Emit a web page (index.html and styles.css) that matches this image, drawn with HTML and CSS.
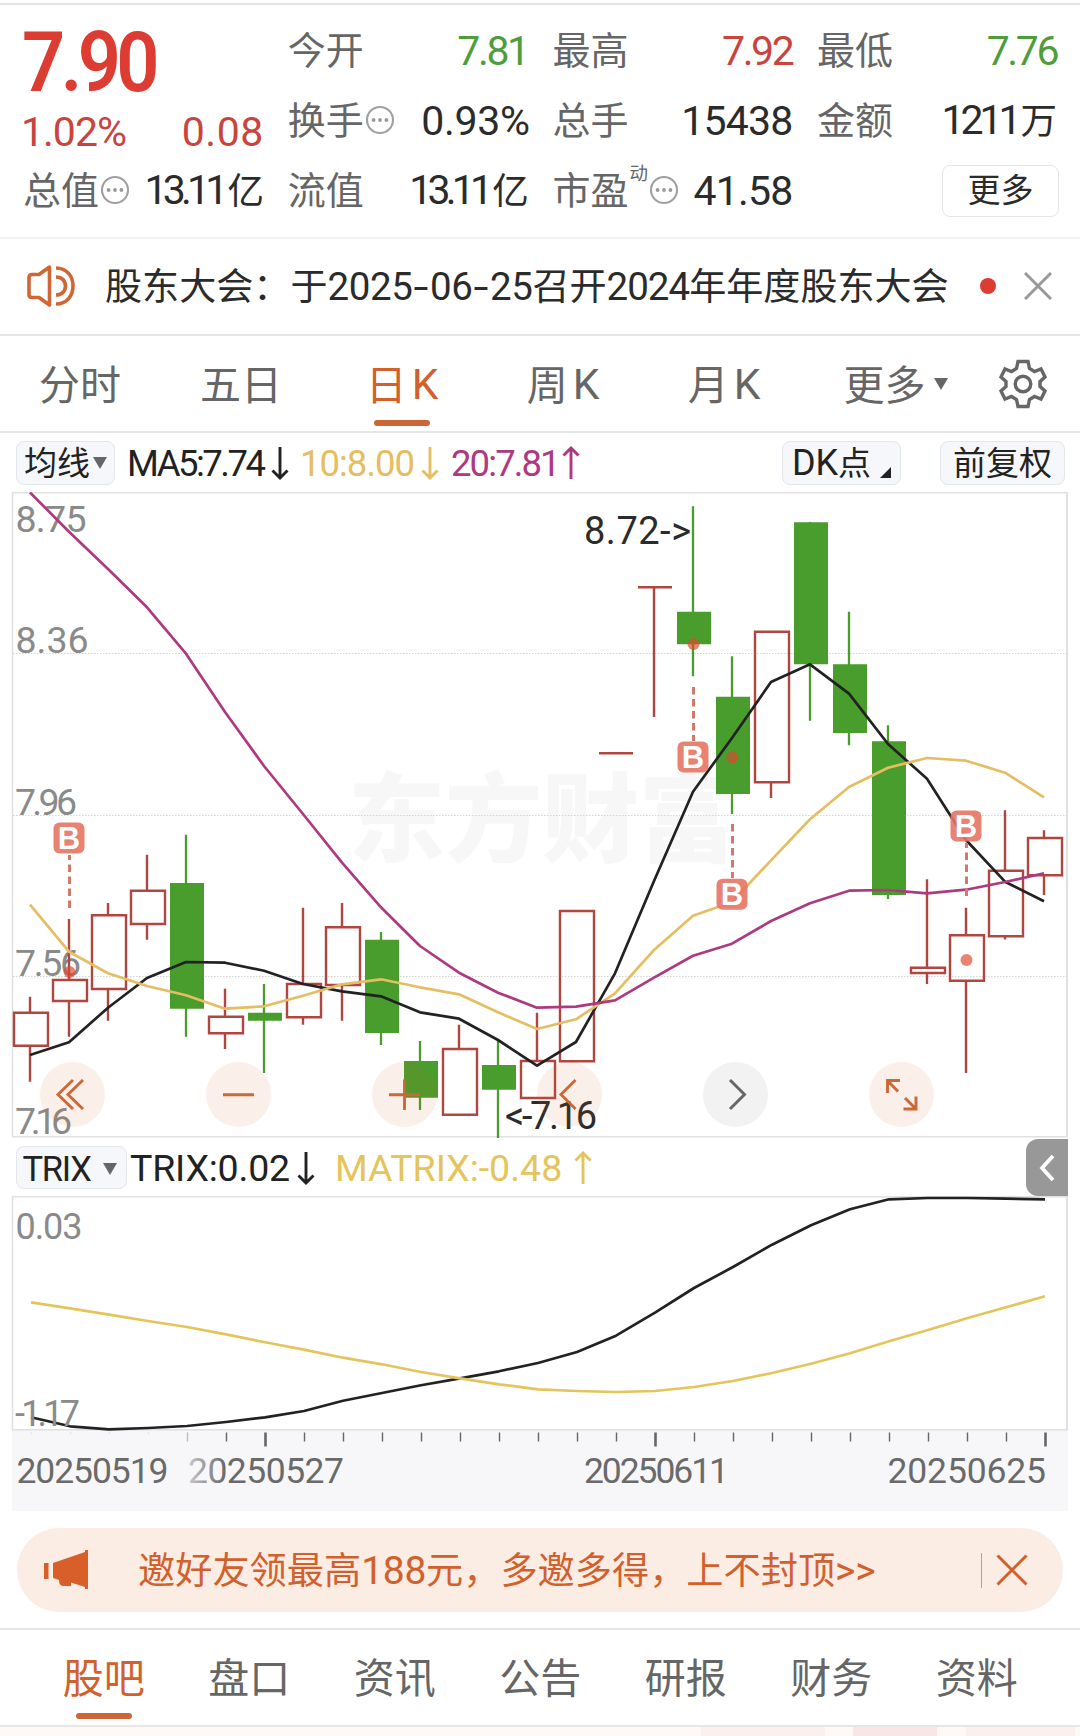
FILE: index.html
```html
<!DOCTYPE html>
<html lang="zh-CN">
<head>
<meta charset="utf-8">
<title>日K</title>
<link rel="stylesheet" href="styles.css">
</head>
<body>
<svg class="defs" width="0" height="0">
  <symbol id="more" viewBox="0 0 30 30"><circle cx="15" cy="15" r="13" fill="none" stroke="#a0a0a0" stroke-width="2.1"/><g fill="#999"><circle cx="8.6" cy="15" r="1.9"/><circle cx="15" cy="15" r="1.9"/><circle cx="21.4" cy="15" r="1.9"/></g></symbol>
  <symbol id="down" viewBox="0 0 18 34"><path d="M9 1V32M1.5 24.5L9 32L16.500 24.5" fill="none" stroke="currentColor" stroke-width="2.9"/></symbol>
  <symbol id="up" viewBox="0 0 18 34"><path d="M9 33V2M1.500 9.500L9 2L16.500 9.500" fill="none" stroke="currentColor" stroke-width="2.9"/></symbol>
  <symbol id="caret" viewBox="0 0 14 12"><path d="M0 0H14L7 12Z" fill="#666"/></symbol>
</svg>

<header class="quote">
  <div class="price">
    <div class="last">7.90</div>
    <div class="change"><span class="pct">1.02%</span><span class="diff">0.08</span></div>
  </div>
  <div class="cell"><span class="label">今开</span><span class="num tight green">7.81</span></div>
  <div class="cell"><span class="label">最高</span><span class="num tight red">7.92</span></div>
  <div class="cell"><span class="label">最低</span><span class="num tight green">7.76</span></div>
  <div class="cell"><span class="label">换手</span><svg class="more"><use href="#more"/></svg><span class="num pc">0.93%</span></div>
  <div class="cell"><span class="label">总手</span><span class="num">15438</span></div>
  <div class="cell"><span class="label">金额</span><span class="num ones">1211<b>万</b></span></div>
  <div class="cell"><span class="label">总值</span><svg class="more"><use href="#more"/></svg><span class="num cap">13.11<b>亿</b></span></div>
  <div class="cell"><span class="label">流值</span><span class="num cap">13.11<b>亿</b></span></div>
  <div class="cell"><span class="label">市盈<sup>动</sup></span><svg class="more pe"><use href="#more"/></svg><span class="num pev">41.58</span></div>
  <div class="cell end"><button class="btn-more">更多</button></div>
</header>

<section class="notice">
  <svg class="speaker" viewBox="0 0 50 44" fill="none" stroke="#cf6635" stroke-width="3.6"><path d="M23.500 3L13 10.500H6Q3 10.500 3 13.500V30.500Q3 33.500 6 33.500H13L23.500 41Z" stroke-linejoin="round"/><path d="M30 4C41 4 47 12.500 47 22C47 31.500 41 40 30 40M30 13C36 13 39.500 17 39.500 22C39.500 27 36 31 30 31"/></svg>
  <p>股东大会：于<i>2025<s>-</s>06<s>-</s>25</i>召开<i class="year">2024</i>年年度股东大会</p>
  <span class="dot"></span>
  <svg class="close" viewBox="0 0 28 28"><path d="M1 1L27 27M27 1L1 27" stroke="#999" stroke-width="3"/></svg>
</section>

<nav class="periods">
  <span>分时</span><span>五日</span><span class="on">日<i>K</i></span><span>周<i>K</i></span><span>月<i>K</i></span>
  <span>更多<svg class="caret"><use href="#caret"/></svg></span>
  <svg class="gear" viewBox="0 0 48 50" fill="none" stroke="#666" stroke-width="3.4"><path d="M19 2.500H29L30.500 9.500L35.500 12.500L42 10L46 18L41 22.500V27.500L46 32L42 40L35.500 37.500L30.500 40.500L29 47.500H19L17.500 40.500L12.500 37.500L6 40L2 32L7 27.500V22.500L2 18L6 10L12.500 12.500L17.500 9.500Z"/><circle cx="24" cy="25" r="7.800"/></svg>
</nav>

<div class="bar ma">
  <span class="chip avg"><em>均线</em><svg class="caret"><use href="#caret"/></svg></span>
  <span class="val v1">MA5:7.74</span><svg class="arrow a1"><use href="#down"/></svg>
  <span class="val v2">10:8.00</span><svg class="arrow a2"><use href="#down"/></svg>
  <span class="val v3">20:7.81</span><svg class="arrow a3"><use href="#up"/></svg>
  <span class="chip dk"><em><i>DK</i>点</em><svg class="corner" viewBox="0 0 11 11"><path d="M11 0V11H0Z" fill="#222"/></svg></span>
  <span class="chip fq"><em>前复权</em></span>
</div>

<svg class="kline" viewBox="0 492 1080 646" width="1080" height="646">
  <text class="mark" x="348" y="854" textLength="388">东方财富</text>
  <g class="frame"><path d="M12 492.700H1068M12.500 492V1137M12 1136.700H1068"/><path d="M1067 492V1137" stroke-width="2"/></g>
  <path class="grid" d="M13 653.500H1067M13 815.500H1067M13 976.500H1067"/>
  <g class="scale">
    <text x="15.500" y="532" textLength="71">8.75</text><text x="15.500" y="653" textLength="73">8.36</text><text x="15" y="815" textLength="62">7.96</text><text x="15" y="976" textLength="66">7.56</text><text x="15" y="1134" textLength="57">7.16</text>
  </g>
  <g class="tip"><text x="584" y="544" textLength="107">8.72-&gt;</text><text x="505" y="1129" textLength="92">&lt;-7.16</text></g>
  <g class="fall">
    <path d="M186 834.700V1036.700M264 984V1073M381 932V1045M420 1041V1110M498 1041V1138M693 506.300V676.300M732 656.300V814M810 522V720.700M849 611.700V745.300M888 725.300V899" fill="none" stroke-width="2.300"/>
    <path class="solid" d="M170 883h34v125.700h-34zM248 1012.700h34v8h-34zM365 939.700h34v93.300h-34zM404 1061h34v36.700h-34zM482 1065h34v24.700h-34zM677 611.700h34v32.600h-34zM716 696.700h34v97.300h-34zM794 522.300h34v142h-34zM833 664.300h34v68.700h-34zM872 741.300h34v153.700h-34z"/>
  </g>
  <path class="rise" d="M14 1012.700h34v33h-34zM30 996.700v16M30 1045.700v36
    M53 980h34v21h-34zM69 919v61M69 1001v35.700
    M92 915.300h34v73.700h-34zM108 903v12.300M108 989v31.700
    M131 890.700h34v33.300h-34zM147 854.700v36M147 924v15.700
    M209 1016.700h34v16.600h-34zM225 988.700v28M225 1033.300v15.700
    M287 984h34v33.300h-34zM303 907.700v76.300M303 1017.300v7.400
    M326 927.300h34v57.700h-34zM342 903v24.300M342 985v35.700
    M443 1049h34v65.700h-34zM459 1024.700v24.300
    M521 1061h34v37h-34zM537 1012.700v48.300
    M560 911h34v150.300h-34zM599 753.300h34M638 587.300h34M654 587.300v129.700
    M755 631.700h34v150.600h-34zM771 782.300v15.700
    M911 967.700h34v5.300h-34zM927 879.300v88.400M927 973v11
    M950 935.300h34v45.400h-34zM966 907.700v27.600M966 980.700v92.300
    M989 870.700h34v65.600h-34zM1005 810.300v60.400M1005 936.300v3.200
    M1028 838h34v37.300h-34zM1044 830.300v7.700M1044 875.300v19.700"/>
  <polyline class="line black" points="30,1055 69,1042.300 108,1007.700 147,978 186,962 225,962.700 264,970.700 303,984 342,991.300 381,996.300 420,1012.300 459,1018.700 498,1040 537,1065.700 576,1042 615,973.300 654,881 693,791.700 732,738 771,682 810,664.300 849,693.700 888,744 927,778.700 966,840 1005,881.700 1044,901.300"/>
  <polyline class="line amber" points="30,904.700 69,951.700 108,973.300 147,986 186,995.300 225,1008.700 264,1006.300 303,995.700 342,984.300 381,979.300 420,987.300 459,994.300 498,1012.300 537,1029 576,1019.300 615,993.300 654,950 693,915.700 732,902 771,860.300 810,819.300 849,787 888,767.700 927,758 966,760.700 1005,772.700 1044,797.300"/>
  <polyline class="line plum" points="30,492.500 69,531.700 108,569 147,607.300 186,653.700 225,712 264,766 303,814 342,862.700 381,907.300 420,946 459,972.700 498,992.700 537,1007.700 576,1006.700 615,1000.300 654,977.700 693,955.700 732,943.700 771,921 810,903.300 849,890.700 888,890 927,893.300 966,889.700 1005,882 1044,873.300"/>
  <path class="lead" d="M69.500 908V855M693.500 687V741M732.500 824V878M966.500 896V843"/>
  <g class="signal">
    <g fill="#db4a30" fill-opacity=".68"><circle cx="69.500" cy="972" r="6"/><circle cx="693.500" cy="644" r="6"/><circle cx="732.500" cy="757.500" r="6"/><circle cx="966.500" cy="960" r="6"/></g>
    <g class="tag"><rect x="53.500" y="822.500" width="31" height="31" rx="6"/><rect x="677.500" y="741.500" width="31" height="31" rx="6"/><rect x="716.500" y="878.700" width="31" height="31" rx="6"/><rect x="950.500" y="810.500" width="31" height="31" rx="6"/></g>
    <text x="69" y="848.500">B</text><text x="693" y="767.500">B</text><text x="732" y="904.700">B</text><text x="966" y="836.500">B</text>
  </g>
  <g fill="#d8622a" fill-opacity=".1"><circle cx="72.500" cy="1094.500" r="32.500"/><circle cx="238.500" cy="1094.500" r="32.500"/><circle cx="404.500" cy="1094.500" r="32.500"/><circle cx="569.500" cy="1094.500" r="32.500"/><circle cx="901.500" cy="1094.500" r="32.500"/></g>
  <circle cx="735.500" cy="1094.500" r="32.500" fill="#f2f2f2"/>
  <path class="ctl" d="M73 1080L58 1094.500L73 1109M83 1080L68 1094.500L83 1109M223 1094.700H254M389 1094.700H420M404.500 1079.500V1110M575.500 1080L561 1094.500L575.500 1109M900 1080.500H887.500V1093M887.500 1080.500L898 1091.500M903.500 1109H916V1096.500M916 1109L905 1098"/>
  <path class="ctl off" d="M730 1080L744.500 1094.500L730 1109"/>
</svg>

<div class="bar trix">
  <span class="chip tx"><em>TRIX</em><svg class="caret"><use href="#caret"/></svg></span>
  <span class="val t1">TRIX:0.02</span><svg class="arrow b1"><use href="#down"/></svg>
  <span class="val t2">MATRIX:-0.48</span><svg class="arrow b2"><use href="#up"/></svg>
  <span class="drawer"><svg viewBox="0 0 16 28"><path d="M14 2L3 14L14 26" fill="none" stroke="#fff" stroke-width="3.800"/></svg></span>
</div>

<svg class="sub" viewBox="0 1196 1080 332" width="1080" height="332">
  <defs><linearGradient id="fade"><stop offset="0" stop-color="#f7f7fa"/><stop offset="1" stop-color="#f7f7fa" stop-opacity="0"/></linearGradient></defs>
  <rect x="12" y="1430" width="1056" height="81" fill="#f7f7fa"/>
  <g class="frame"><path d="M12 1196.700H1068M12.500 1196V1430M12 1429.700H1068"/><path d="M1067 1196V1430" stroke-width="2"/></g>
  <polyline class="line black" points="31,1417.300 70,1426.300 109,1429.300 148,1428 187,1426 226,1422 265,1417.300 304,1411 343,1400.700 382,1393 421,1385.300 460,1378.300 499,1371.300 538,1363 577,1352 616,1335.700 655,1312.700 694,1288 733,1267 772,1244.700 811,1225.300 850,1209.300 889,1199.300 928,1198 967,1198 1006,1198.700 1045,1199.300"/>
  <polyline class="line gold" points="31,1302.300 70,1308.300 109,1314.700 148,1321 187,1327 226,1334.300 265,1342.300 304,1349.700 343,1357.700 382,1364.300 421,1372 460,1378.300 499,1384.300 538,1389.300 577,1391 616,1392 655,1391 694,1387 733,1381 772,1373 811,1363.700 850,1353.300 889,1341.300 928,1330 967,1318.300 1006,1307.300 1045,1296.300"/>
  <g class="scale small"><text x="15.500" y="1239" textLength="67">0.03</text><text x="15" y="1426" textLength="65">-1.17</text></g>
  <path class="tick" stroke-opacity=".12" d="M31.500 1432v2M70.500 1432v2M109.500 1432v2M148.500 1432v2"/>
  <path class="tick" stroke-opacity=".4" d="M187.500 1432.500v9"/>
  <path class="tick" d="M226.500 1432.500v9M304.500 1432.500v9M343.500 1432.500v9M382.500 1432.500v9M421.500 1432.500v9M460.500 1432.500v9M499.500 1432.500v9M538.500 1432.500v9M577.500 1432.500v9M616.500 1432.500v9M694.500 1432.500v9M733.500 1432.500v9M772.500 1432.500v9M811.500 1432.500v9M850.500 1432.500v9M889.500 1432.500v9M928.500 1432.500v9M967.500 1432.500v9M1006.500 1432.500v9"/>
  <path class="tick major" d="M265.500 1432.500v14M655.500 1432.500v14M1045.500 1432.500v14"/>
  <g class="date">
    <text x="188" y="1482.500" textLength="156">20250527</text>
    <rect x="170" y="1450" width="55" height="40" fill="url(#fade)"/>
    <text x="16.500" y="1482.500" textLength="152">20250519</text><text x="584" y="1482.500" textLength="145">20250611</text><text x="887.500" y="1482.500" textLength="158.500">20250625</text>
  </g>
</svg>

<aside class="invite">
  <svg class="horn" viewBox="0 0 46 40" fill="#d85f29"><path d="M0 13H4.500V29H0ZM9 13L41 2V0H44V39H41V37L27 32.500V36L20 36Q15 36 15 31V30L9 28Z"/></svg>
  <p>邀好友领最高<i>188</i>元，多邀多得，上不封顶<i class="gt">&gt;&gt;</i></p>
  <span class="rule"></span>
  <svg class="shut" viewBox="0 0 32 32"><path d="M1.500 1.500L30.500 30.500M30.500 1.500L1.500 30.500" stroke="#d2602c" stroke-width="3"/></svg>
</aside>

<nav class="sections">
  <span class="on">股吧</span><span>盘口</span><span>资讯</span><span>公告</span><span>研报</span><span>财务</span><span>资料</span>
</nav>
<div class="feed"><span></span><span></span><span></span></div>
</body>
</html>
```
FILE: styles.css
```css
* { box-sizing: border-box; }
body {
  margin: 0; width: 1080px; height: 1736px; overflow: hidden; background: #fff; color: #2b2b2b;
  font-family: Roboto, "Noto Sans CJK SC", sans-serif; display: flex; flex-direction: column;
}
body > * { flex: none; }
p { margin: 0; }
i, b, em { font-style: normal; font-weight: inherit; }
svg { display: block; flex: none; }
.defs { height: 0; }
.red { color: #c8443d; }
.green { color: #4f9d3a; }

.quote {
  height: 236px; margin-top: 3px; padding: 11px 0 0 23px; border-top: 2px solid #e4e4e4; border-bottom: 2px solid #f2f2f2;
  margin-bottom: -2px;
  display: grid; grid-template-columns: repeat(4, 240px); grid-template-rows: repeat(3, 70px); column-gap: 24.700px;
}
.price { grid-row: span 2; display: flex; flex-direction: column; color: #c8443d; }
.last { height: 83px; font-size: 84px; line-height: 84px; font-weight: 600; letter-spacing: -5px; color: #dc3c32; padding-top: 5px; margin-left: -1px; transform: scaleX(.9); transform-origin: 0 0; }
.change { display: flex; justify-content: space-between; font-size: 41px; line-height: 48px; padding: 9px 0 0; width: 241px; white-space: nowrap; }
.pct { margin-left: -2px; letter-spacing: -1px; }
.diff { letter-spacing: .6px; }
.cell { display: flex; align-items: center; height: 70px; white-space: nowrap; }
.label { font-size: 38px; line-height: 50px; color: #666; position: relative; }
.label sup { position: absolute; left: 77px; top: -6px; font-size: 18.500px; line-height: 28px; }
.more { width: 30px; height: 30px; margin: -2px 0 0 1px; }
.more.pe { margin-left: 21px; }
.num { margin-left: auto; font-size: 41px; line-height: 50px; letter-spacing: -.8px; margin-right: 0; }
.num b { font-size: 36.500px; letter-spacing: 0; margin-left: 4px; }
.tight { letter-spacing: -2.400px; margin-right: 0; }
.pc { letter-spacing: -.3px; margin-right: -2px; }
.ones { letter-spacing: -4px; margin-right: 0; }
.cap { letter-spacing: -4.800px; margin-right: -1px; }
.ones b { margin-left: 3px; }
.cap b { margin-left: 4px; }
.end { justify-content: flex-end; }
.btn-more { width: 117px; height: 52px; border: 1.500px solid #e3e7e9; border-radius: 8px; background: #fff; font: 33px/46px Roboto, "Noto Sans CJK SC", sans-serif; color: #2b2b2b; padding: 0; margin-right: -2px; }

.notice { height: 99px; border-bottom: 2px solid #e6e6e6; display: flex; align-items: center; padding: 1px 28px 0 26px; }
.speaker { width: 50px; height: 44px; }
.notice p { margin: 2px 0 0 29px; width: 850px; font-size: 37.100px; line-height: 50px; white-space: nowrap; }
.notice i { font-size: 38.500px; letter-spacing: -.4px; }
.notice s { text-decoration: none; display: inline-block; transform: scaleX(1.4); width: 17.500px; text-align: center; }
.notice .year { letter-spacing: -1px; }
.dot { width: 16px; height: 16px; border-radius: 50%; background: #dc3c32; margin-left: 25px; }
.close { width: 28px; height: 28px; margin-left: 28px; }

.periods { height: 97px; border-bottom: 2px solid #e6e6e6; display: grid; grid-template-columns: repeat(5, 161px) 182px 1fr; align-items: center; justify-items: center; color: #666; font-size: 41px; }
.periods span { display: flex; align-items: center; height: 95px; padding-bottom: 3px; margin-left: -1px; }
.periods i { margin: 4px 0 0 5px; font-size: 42.500px; }
.on { color: #d2602c; position: relative; }
.on::after { content: ""; position: absolute; left: 50%; bottom: 5px; width: 56px; height: 6px; margin-left: -28px; border-radius: 3px; background: #cf6534; }
.caret { width: 14px; height: 12px; }
.periods .caret { margin: 4px 0 0 8px; }
.gear { width: 48px; height: 50px; margin-right: 22px; }

.bar { display: flex; align-items: center; padding-left: 16px; white-space: nowrap; font-size: 36.500px; color: #222; }
.ma { height: 59px; }
.chip { height: 44px; border: 1.500px solid #e3e6ea; border-radius: 8px; background: #f6f7fa; display: flex; align-items: center; justify-content: center; font-size: 33px; flex: none; }
.chip em { margin-top: -3px; }
.val { flex: none; padding-top: 1px; }
.arrow { width: 18px; height: 34px; }
.avg { width: 99px; }
.avg .caret { margin-left: 3px; }
.v1 { width: 144px; margin-left: 12px; letter-spacing: -2.500px; }
.v2 { width: 121px; margin-left: 11px; letter-spacing: -1px; color: #e5bd62; }
.a2 { color: #e5bd62; }
.v3 { width: 111px; margin-left: 12px; letter-spacing: -1.900px; color: #ad3a80; }
.a3 { color: #ad3a80; }
.dk { width: 119px; margin-left: auto; padding-right: 0; }
.dk i { font-size: 36px; }
.corner { width: 11px; height: 11px; margin: 20px 0 0 9px; }
.fq { width: 125px; margin: 0 15px 0 39px; }

.frame { stroke: #e0e0e0; stroke-width: 1.500; fill: none; }
.grid { stroke: #d4d4d4; stroke-dasharray: 1.500 1.500; }
.mark { font: 900 97px "Noto Sans CJK SC", sans-serif; fill: #f7f7f7; }
.scale { font-size: 37.500px; fill: #8a8a8a; }
.small { font-size: 36px; }
.tip { font-size: 38px; fill: #2b2b2b; }
.fall { stroke: #489d2d; }
.solid { fill: #489d2d; stroke: none; }
.rise { fill: none; stroke: #b04640; stroke-width: 2.400; }
.line { fill: none; stroke-width: 2.700; stroke-linejoin: round; }
.black { stroke: #222; }
.amber { stroke: #e5bd62; }
.gold { stroke: #e3c55c; }
.plum { stroke: #ad3a80; }
.lead { stroke: #d07a6c; stroke-width: 3; stroke-dasharray: 7.500 4.500; fill: none; }
.tag { fill: #e57564; fill-opacity: .9; }
.signal text { font: 700 31px "Liberation Sans", sans-serif; fill: #fff; text-anchor: middle; }
.ctl { fill: none; stroke: #cc6736; stroke-width: 2.900; }
.off { stroke: #666; }

.trix { height: 58px; font-size: 37.500px; padding-top: 1px; }
.tx { width: 111px; font-size: 34.500px; height: 43px; letter-spacing: -1.300px; padding-right: 3px; }
.tx em { margin-top: 2px; }
.tx .caret { margin: 2px 0 0 13px; }
.t1 { width: 167px; margin-left: 3px; letter-spacing: -.2px; }
.t2 { width: 239px; margin-left: 20px; letter-spacing: 0; color: #e3c55c; }
.b2 { color: #e3c55c; }
.drawer { width: 42px; height: 57px; margin: 0 12px 0 auto; border-radius: 12px 0 0 12px; background: #989898; display: flex; align-items: center; justify-content: center; }
.drawer svg { width: 16px; height: 28px; }

.tick { stroke: #666; stroke-width: 1.400; fill: none; }
.major { stroke-width: 2.600; }
.date { font-size: 35.500px; fill: #6a6a6a; }

.invite { height: 84px; margin: 0 17px; border-radius: 42px; background: #fbede4; color: #d2602c; display: flex; align-items: center; padding: 0 35px 0 27px; }
.horn { width: 46px; height: 40px; }
.invite p { margin: 1px 0 0 48px; font-size: 37.200px; line-height: 50px; white-space: nowrap; width: 760px; }
.invite i { font-size: 39px; letter-spacing: -.3px; }
.rule { width: 1.500px; height: 35px; background: #dd9470; margin-left: auto; margin-right: 14px; }
.shut { width: 32px; height: 32px; }

.sections { margin-top: 16px; height: 99px; padding: 0 31px; border-top: 2px solid #e6e6e6; border-bottom: 2px solid #e6e6e6; display: grid; grid-template-columns: repeat(7, 145.500px); justify-items: center; font-size: 41px; line-height: 98px; color: #666; }
.sections .on { color: #d2602c; height: 95px; }
.sections .on::after { bottom: 6px; }
.feed { height: 9px; background: #fef8f6; display: flex; padding-left: 701px; }
.feed span { width: 124px; background: #fcf0ee; }
.feed span + span { width: 84px; margin-left: 28px; background: #f8e6e7; }
.feed span + span + span { width: 109px; margin-left: 29px; background: #fcf0ee; }
```
